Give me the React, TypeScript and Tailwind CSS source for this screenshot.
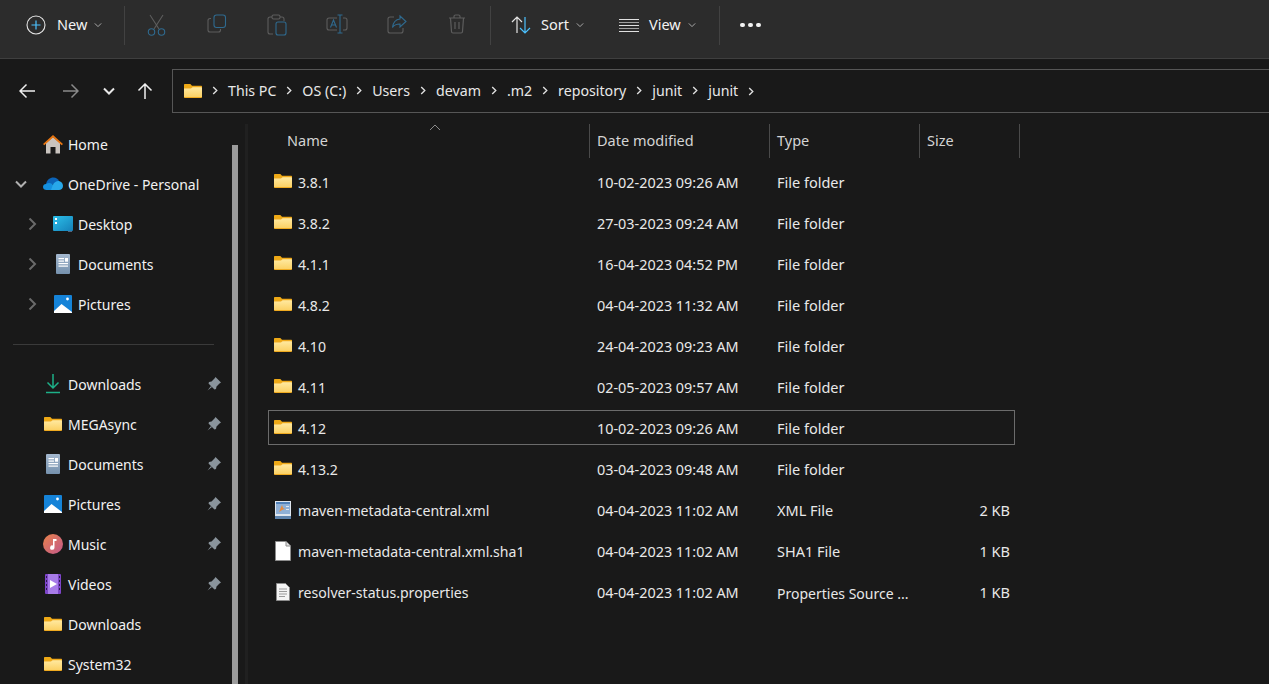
const FONT = "font-['Noto_Sans','Open_Sans',sans-serif]";

function FolderIcon({ className = "" }: { className?: string }) {
  return (
    <svg viewBox="0 0 18 14" className={`h-[14px] w-[18px] ${className}`}>
      <defs>
        <linearGradient id="folderBody" x1="0" y1="0" x2="0" y2="1">
          <stop offset="0" stopColor="#ffe9a0" />
          <stop offset="1" stopColor="#fbd165" />
        </linearGradient>
      </defs>
      <path d="M0 1c0-.6.4-1 1-1h4.800c.3 0 .6.100.8.300L8 1.800h9c.6 0 1 .4 1 1V5H0z" fill="#eea916" />
      <path d="M0 3.800h6.800L8.400 2.600H17c.6 0 1 .4 1 1V13c0 .6-.4 1-1 1H1c-.6 0-1-.4-1-1z" fill="#efaa20" />
      <path d="M0 4.500h7L8.600 3.300H17.200c.5 0 .8.300.8.800V13H0z" fill="url(#folderBody)" />
    </svg>
  );
}

function DocIcon() {
  return (
    <svg viewBox="0 0 16 20" className="h-[20px] w-[16px]">
      <defs>
        <linearGradient id="docBody" x1="0" y1="0" x2="0" y2="1">
          <stop offset="0" stopColor="#a4b8cf" />
          <stop offset="1" stopColor="#7591ad" />
        </linearGradient>
      </defs>
      <rect x="1" y="0" width="14" height="20" rx="1" fill="url(#docBody)" />
      <rect x="3.500" y="4" width="5.500" height="1.200" fill="#fff" />
      <rect x="3.500" y="6.500" width="5.500" height="1.200" fill="#fff" />
      <rect x="10" y="4" width="3" height="3.700" fill="#fff" />
      <rect x="3.500" y="9" width="9.500" height="1.200" fill="#fff" />
      <rect x="3.500" y="11.500" width="9.500" height="1.200" fill="#fff" />
    </svg>
  );
}

function PicturesIcon() {
  return (
    <svg viewBox="0 0 18 18" className="h-[18px] w-[18px]">
      <rect width="18" height="18" rx="1" fill="#1583d8" />
      <circle cx="13.500" cy="4" r="1.400" fill="#fff" />
      <path d="M0 18v-2l7.500-7 10.500 8v1z" fill="#fff" />
    </svg>
  );
}

function HomeIcon() {
  return (
    <svg viewBox="0 0 20 20" className="h-[20px] w-[20px]">
      <path d="M3 9l7-6 7 6v10.500H12.500V13h-5v6.500H3z" fill="#c9c4bf" />
      <path d="M0 10L10 1l10 9-1.300 1.200L10 3.500 1.300 11.200z" fill="#e87511" />
    </svg>
  );
}

function CloudIcon() {
  return (
    <svg viewBox="0 0 20 14" className="h-[14px] w-[20px]">
      <path d="M3 7.500C3.500 3 7 .5 10.500.5c2.500 0 4.500 1.300 5.500 3.500l-5 3z" fill="#0c64b8" />
      <path d="M3.500 13C1.500 13 0 11.700 0 10c0-1.700 1.300-3 3-3 2-1.500 4-1.500 6 0l5 3 2 3z" fill="#1490df" />
      <path d="M10 7.500c1.500-2.500 4-4 6-3.500 2.500.5 4 2.500 4 5 0 2.500-2 4-4 4H8z" fill="#28a8ea" />
    </svg>
  );
}

function DesktopIcon() {
  return (
    <svg viewBox="0 0 20 16" className="h-[16px] w-[20px]">
      <defs>
        <linearGradient id="desk" x1="0" y1="0" x2="1" y2="1">
          <stop offset="0" stopColor="#2cc0ea" />
          <stop offset="1" stopColor="#1580b8" />
        </linearGradient>
      </defs>
      <rect width="20" height="15" rx="1" fill="url(#desk)" />
      <rect x="2" y="2" width="2" height="2" fill="#fff" />
      <rect x="2" y="6" width="2" height="2" fill="#fff" />
      <rect x="15.500" y="15" width="1" height="1" fill="#9ad" />
      <rect x="17.500" y="15" width="1" height="1" fill="#9ad" />
    </svg>
  );
}

function DownloadIcon() {
  return (
    <svg viewBox="0 0 16 20" fill="none" stroke="#1db088" strokeWidth="1.500" className="h-[20px] w-[16px]">
      <path d="M8 0v14M2.500 8.500L8 14l5.500-5.500M1 18.500h14" />
    </svg>
  );
}

function MusicIcon() {
  return (
    <svg viewBox="0 0 20 20" className="h-[20px] w-[20px]">
      <defs>
        <linearGradient id="mus" x1="0" y1="0" x2="1" y2="1">
          <stop offset="0" stopColor="#e8824a" />
          <stop offset="1" stopColor="#c2588c" />
        </linearGradient>
      </defs>
      <circle cx="10" cy="10" r="10" fill="url(#mus)" />
      <path d="M10 5h3.500v2H11.500v6.500a2.200 2.200 0 1 1-1.500-2z" fill="#fff" />
    </svg>
  );
}

function VideoIcon() {
  return (
    <svg viewBox="0 0 16 20" className="h-[20px] w-[16px]">
      <rect width="16" height="20" rx="1" fill="#7d45c8" />
      <rect x="3" width="10" height="20" fill="#a77be8" />
      <path d="M5 6l7 4-7 4z" fill="#fff" />
      {[2, 6, 10, 14].map((y) => (
        <g key={y} fill="#2c1a4e">
          <rect x="1" y={y} width="1" height="2" />
          <rect x="14" y={y} width="1" height="2" />
        </g>
      ))}
    </svg>
  );
}

function PinIcon() {
  return (
    <svg viewBox="0 0 14 14" className="h-[14px] w-[14px]">
      <path d="M8.500 0L14 5.500 12.500 6.500 9.500 9.500 9 12 7.500 12.500 1.500 6.500 2 5 4.500 4.500 7.500 1.500z" fill="#8a949c" />
      <path d="M4 9L.5 13.500 5 10z" fill="#8a949c" />
    </svg>
  );
}

function SmallCaret() {
  return (
    <svg viewBox="0 0 10 6" fill="none" stroke="#c8c8c8" strokeWidth="1" className="ml-[7px] h-[6px] w-[8px]">
      <path d="M1 1l4 4 4-4" />
    </svg>
  );
}

function Chevron({ open = false, className = "" }: { open?: boolean; className?: string }) {
  return (
    <svg viewBox="0 0 12 12" fill="none" stroke="currentColor" strokeWidth="2" className={`h-[12px] w-[12px] ${className}`}>
      <path d={open ? "M1 3.500l5 5 5-5" : "M3.500 .5l5.500 5.500-5.500 5.500"} />
    </svg>
  );
}

function CrumbChevron() {
  return (
    <svg viewBox="0 0 6 10" fill="none" stroke="#e0e0e0" strokeWidth="1.500" className="mx-[10px] h-[9px] w-[6px] shrink-0">
      <path d="M1 1l4 4-4 4" />
    </svg>
  );
}

function ToolIcon({ children }: { children: React.ReactNode }) {
  return <div className="flex w-[60px] justify-center">{children}</div>;
}

function Toolbar() {
  const grey = "#5d5d5d";
  const blue = "#2f6a8f";
  return (
    <div className="flex h-[59px] items-center border-b border-[#3f3f3f] bg-[#2c2c2c] pb-[8px] text-[14.500px] text-[#f2f2f2]">
      <div className="flex w-[124px] items-center pl-[26px]">
        <svg viewBox="0 0 20 20" fill="none" className="h-[20px] w-[20px]">
          <circle cx="10" cy="10" r="9" stroke="#e4e4e4" strokeWidth="1.100" />
          <path d="M10 5.500v9M5.500 10h9" stroke="#4cc2ff" strokeWidth="1.200" />
        </svg>
        <span className="ml-[11px]">New</span>
        <SmallCaret />
      </div>
      <div className="h-[39px] w-px bg-[#424242]" />
      <div className="flex pl-[2px]">
        <ToolIcon>
          <svg viewBox="0 0 20 22" fill="none" strokeWidth="1.100" className="h-[22px] w-[20px]">
            <path d="M3 1l9 14M16 1L7 15" stroke={grey} />
            <circle cx="4.500" cy="18" r="3.200" stroke={blue} />
            <circle cx="14.500" cy="18" r="3.200" stroke={blue} />
          </svg>
        </ToolIcon>
        <ToolIcon>
          <svg viewBox="0 0 20 20" fill="none" strokeWidth="1.100" className="h-[20px] w-[20px]">
            <path d="M4 4.500H3a2 2 0 0 0-2 2V16a2 2 0 0 0 2 2h8.500a2 2 0 0 0 2-2v-1" stroke={grey} />
            <rect x="7" y="1" width="11.500" height="12.500" rx="2.500" stroke={blue} />
          </svg>
        </ToolIcon>
        <ToolIcon>
          <svg viewBox="0 0 20 22" fill="none" strokeWidth="1.100" className="h-[22px] w-[20px]">
            <path d="M5 3H3a2 2 0 0 0-2 2v13a2 2 0 0 0 2 2h3M13 3h2a2 2 0 0 1 2 2v2" stroke={grey} />
            <rect x="5" y="1" width="8" height="4" rx="1.500" stroke={grey} />
            <rect x="9" y="8" width="10" height="13" rx="2" stroke={blue} />
          </svg>
        </ToolIcon>
        <ToolIcon>
          <svg viewBox="0 0 22 20" fill="none" strokeWidth="1.100" className="h-[20px] w-[22px]">
            <path d="M11 4H3a2 2 0 0 0-2 2v8a2 2 0 0 0 2 2h8M17 4h2a2 2 0 0 1 2 2v8a2 2 0 0 1-2 2h-2" stroke={grey} />
            <path d="M14 1v18M11.500 1h5M11.500 19h5M4.500 13.500L7.500 6l3 7.500M5.500 11h4" stroke={blue} />
          </svg>
        </ToolIcon>
        <ToolIcon>
          <svg viewBox="0 0 20 20" fill="none" strokeWidth="1.100" className="h-[20px] w-[20px]">
            <path d="M7 3H3a2 2 0 0 0-2 2v12a2 2 0 0 0 2 2h11a2 2 0 0 0 2-2v-3" stroke={grey} />
            <path d="M13 2l6 5.500-6 5.500V10c-3.500 0-6 1-7.500 3.500C6 9 8.500 5.500 13 5z" stroke={blue} />
          </svg>
        </ToolIcon>
        <ToolIcon>
          <svg viewBox="0 0 18 20" fill="none" stroke={grey} strokeWidth="1.200" className="h-[20px] w-[18px]">
            <path d="M1 4h16M6 4V2.500A1.500 1.500 0 0 1 7.500 1h3A1.500 1.500 0 0 1 12 2.500V4M2.500 4l1 13.500a1.500 1.500 0 0 0 1.500 1.500h8a1.500 1.500 0 0 0 1.500-1.500l1-13.500M7 8v7M11 8v7" />
          </svg>
        </ToolIcon>
      </div>
      <div className="ml-[3px] h-[39px] w-px bg-[#424242]" />
      <div className="flex w-[228px] items-center pl-[20px]">
        <svg viewBox="0 0 20 18" fill="none" strokeWidth="1.200" className="h-[18px] w-[20px]">
          <path d="M6 17V1M1 6l5-5 5 5" stroke="#e4e4e4" />
          <path d="M14 1v16M9 12l5 5 5-5" stroke="#4cc2ff" />
        </svg>
        <span className="ml-[10px]">Sort</span>
        <SmallCaret />
        <div className="ml-[35px] flex h-[13px] w-[20px] flex-col justify-between">
          <div className="h-px bg-[#e0e0e0]" />
          <div className="h-px bg-[#a0a0a0]" />
          <div className="h-px bg-[#e0e0e0]" />
          <div className="h-px bg-[#a0a0a0]" />
          <div className="h-px bg-[#e0e0e0]" />
        </div>
        <span className="ml-[10px]">View</span>
        <SmallCaret />
      </div>
      <div className="h-[39px] w-px bg-[#424242]" />
      <div className="ml-[20px] flex gap-[3.500px]">
        <div className="h-[4.500px] w-[4.500px] rounded-full bg-[#f2f2f2]" />
        <div className="h-[4.500px] w-[4.500px] rounded-full bg-[#f2f2f2]" />
        <div className="h-[4.500px] w-[4.500px] rounded-full bg-[#f2f2f2]" />
      </div>
    </div>
  );
}

const crumbs = ["This PC", "OS (C:)", "Users", "devam", ".m2", "repository", "junit", "junit"];

function NavArrow({ d, className }: { d: string; className: string }) {
  return (
    <svg viewBox="0 0 16 16" fill="none" stroke="currentColor" strokeWidth="1.500" className={`h-[16px] w-[16px] ${className}`}>
      <path d={d} />
    </svg>
  );
}

function NavBar() {
  return (
    <div className="flex h-[65px] items-center pb-[2px] pt-[1px]">
      <div className="flex w-[172px] items-center">
        <NavArrow d="M16 8H1M7.500 1.500L1 8l6.500 6.500" className="ml-[19px] text-[#f0f0f0]" />
        <NavArrow d="M0 8h15M8.500 1.500L15 8l-6.500 6.500" className="ml-[28px] text-[#8a8a8a]" />
        <Chevron open className="ml-[24px] text-[#e8e8e8]" />
        <NavArrow d="M8 16V1M1.500 7.500L8 1l6.500 6.500" className="ml-[22px] text-[#f0f0f0]" />
      </div>
      <div className="flex h-[44px] flex-1 items-center border border-r-0 border-[#565656] pl-[11px] text-[14.200px] text-[#e8e8e8]">
        <FolderIcon />
        {crumbs.map((c, i) => (
          <div key={i} className="flex items-center">
            <CrumbChevron />
            <span>{c}</span>
          </div>
        ))}
        <CrumbChevron />
      </div>
    </div>
  );
}

function SideRow({ icon, label, indent, caret, pin }: { icon: React.ReactNode; label: string; indent?: boolean; caret?: "open" | "closed"; pin?: boolean }) {
  return (
    <div className="flex h-[40px] shrink-0 items-center text-[14px] text-[#f2f2f2]">
      <div className={`flex items-center ${indent ? "w-[53px]" : "w-[43px]"}`}>
        {caret === "open" && <Chevron open className="ml-[15px] text-[#b0b0b0]" />}
        {caret === "closed" && <Chevron className="ml-[26px] text-[#6a6a6a]" />}
      </div>
      <div className="flex h-[20px] w-[20px] items-center justify-center">{icon}</div>
      <span className="ml-[5px] flex-1">{label}</span>
      {pin && <div className="mr-[27px]"><PinIcon /></div>}
    </div>
  );
}

function Sidebar() {
  return (
    <div className="relative w-[248px] shrink-0 overflow-hidden">
      <div className="flex flex-col">
        <SideRow icon={<HomeIcon />} label="Home" />
        <SideRow icon={<CloudIcon />} label="OneDrive - Personal" caret="open" />
        <SideRow icon={<DesktopIcon />} label="Desktop" indent caret="closed" />
        <SideRow icon={<DocIcon />} label="Documents" indent caret="closed" />
        <SideRow icon={<PicturesIcon />} label="Pictures" indent caret="closed" />
        <div className="flex h-[40px] shrink-0 items-center pl-[13px] pr-[34px]">
          <div className="h-px w-full bg-[#3a3a3a]" />
        </div>
        <SideRow icon={<DownloadIcon />} label="Downloads" pin />
        <SideRow icon={<FolderIcon />} label="MEGAsync" pin />
        <SideRow icon={<DocIcon />} label="Documents" pin />
        <SideRow icon={<PicturesIcon />} label="Pictures" pin />
        <SideRow icon={<MusicIcon />} label="Music" pin />
        <SideRow icon={<VideoIcon />} label="Videos" pin />
        <SideRow icon={<FolderIcon />} label="Downloads" />
        <SideRow icon={<FolderIcon />} label="System32" />
      </div>
      {/* scrollbar thumb and the pane divider */}
      <div className="absolute bottom-0 left-[232px] top-[21px] w-[6px] bg-[#9b9b9b]" />
      <div className="absolute bottom-0 right-0 top-0 w-[3px] bg-[#202020]" />
    </div>
  );
}

type FileRow = { name: string; date: string; type: string; size?: string; icon?: "xml" | "blank" | "props"; selected?: boolean };

const files: FileRow[] = [
  { name: "3.8.1", date: "10-02-2023 09:26 AM", type: "File folder" },
  { name: "3.8.2", date: "27-03-2023 09:24 AM", type: "File folder" },
  { name: "4.1.1", date: "16-04-2023 04:52 PM", type: "File folder" },
  { name: "4.8.2", date: "04-04-2023 11:32 AM", type: "File folder" },
  { name: "4.10", date: "24-04-2023 09:23 AM", type: "File folder" },
  { name: "4.11", date: "02-05-2023 09:57 AM", type: "File folder" },
  { name: "4.12", date: "10-02-2023 09:26 AM", type: "File folder", selected: true },
  { name: "4.13.2", date: "03-04-2023 09:48 AM", type: "File folder" },
  { name: "maven-metadata-central.xml", date: "04-04-2023 11:02 AM", type: "XML File", size: "2 KB", icon: "xml" },
  { name: "maven-metadata-central.xml.sha1", date: "04-04-2023 11:02 AM", type: "SHA1 File", size: "1 KB", icon: "blank" },
  { name: "resolver-status.properties", date: "04-04-2023 11:02 AM", type: "Properties Source ...", size: "1 KB", icon: "props" },
];

function FileIcon({ kind }: { kind?: FileRow["icon"] }) {
  if (kind === "xml") {
    return (
      <svg viewBox="0 0 16 18" className="mb-[2px] h-[18px] w-[16px]">
        <rect width="16" height="16" fill="#dfe6ef" />
        <rect x="1" y="1" width="14" height="2" fill="#4f80b8" />
        <rect x="1" y="3" width="14" height="10" fill="#8fb0d6" />
        <path d="M4 11l3-7 1 3 2 1-2 .5z" fill="#e88a3a" />
        <rect x="11" y="5" width="3" height="1" fill="#dfe6ef" />
        <rect x="11" y="8" width="3" height="1" fill="#dfe6ef" />
        <rect x="0" y="15" width="16" height="3" fill="#5d83ad" />
      </svg>
    );
  }
  if (kind === "blank") {
    return (
      <svg viewBox="0 0 16 20" className="mb-[2px] h-[20px] w-[16px]">
        <path d="M.500.500H11L15.500 5v14.500H.500z" fill="#fff" stroke="#8c8c8c" />
        <path d="M11 .500V5h4.500" fill="#e0e0e0" stroke="#8c8c8c" />
      </svg>
    );
  }
  if (kind === "props") {
    return (
      <svg viewBox="0 0 14 18" className="mb-[2px] h-[18px] w-[14px]">
        <path d="M.500.500H9.500L13.500 4.500v13H.500z" fill="#f4f4f4" stroke="#8c8c8c" />
        <path d="M3 6h8M3 8.500h8M3 11h8M3 13.500h6" stroke="#9a9a9a" />
      </svg>
    );
  }
  return <FolderIcon className="mb-[3px]" />;
}

function FileList() {
  return (
    <div className="flex-1 pl-[20px] text-[14.500px]">
      {/* column header */}
      <div className="relative flex h-[34px] items-center text-[#d4d4d4]">
        <div className="flex h-full w-[322px] items-center border-r border-[#4a4a4a] pl-[19px]">Name</div>
        <div className="flex h-full w-[180px] items-center border-r border-[#4a4a4a] pl-[7px]">Date modified</div>
        <div className="flex h-full w-[150px] items-center border-r border-[#4a4a4a] pl-[7px]">Type</div>
        <div className="flex h-full w-[100px] items-center border-r border-[#4a4a4a] pl-[7px]">Size</div>
        <svg viewBox="0 0 12 7" fill="none" stroke="#8a8a8a" strokeWidth="1" className="absolute left-[161px] top-[0px] h-[7px] w-[12px]">
          <path d="M1 6l5-5 5 5" />
        </svg>
      </div>
      <div className="mt-[6px] flex flex-col gap-[6px]">
        {files.map((f) => (
          <div key={f.name} className={`flex h-[35px] w-[747px] items-center border pt-[3px] text-[#e8e8e8] ${f.selected ? "border-[#6b6b6b]" : "border-transparent"}`}>
            <div className="flex w-[321px] items-center text-[14.100px]">
              <div className="ml-[4px] flex w-[19px] justify-center"><FileIcon kind={f.icon} /></div>
              <span className="ml-[6px]">{f.name}</span>
            </div>
            <span className="w-[180px] pl-[7px] text-[14.400px]">{f.date}</span>
            <span className={`w-[160px] pl-[7px] ${f.icon === "props" ? "text-[14px]" : ""}`}>{f.type}</span>
            <span className="w-[80px] text-right">{f.size}</span>
          </div>
        ))}
      </div>
    </div>
  );
}

export default function App() {
  return (
    <div className={`flex h-[684px] w-[1269px] flex-col overflow-hidden bg-[#191919] ${FONT}`}>
      <Toolbar />
      <NavBar />
      <div className="flex min-h-0 flex-1">
        <Sidebar />
        <FileList />
      </div>
    </div>
  );
}
